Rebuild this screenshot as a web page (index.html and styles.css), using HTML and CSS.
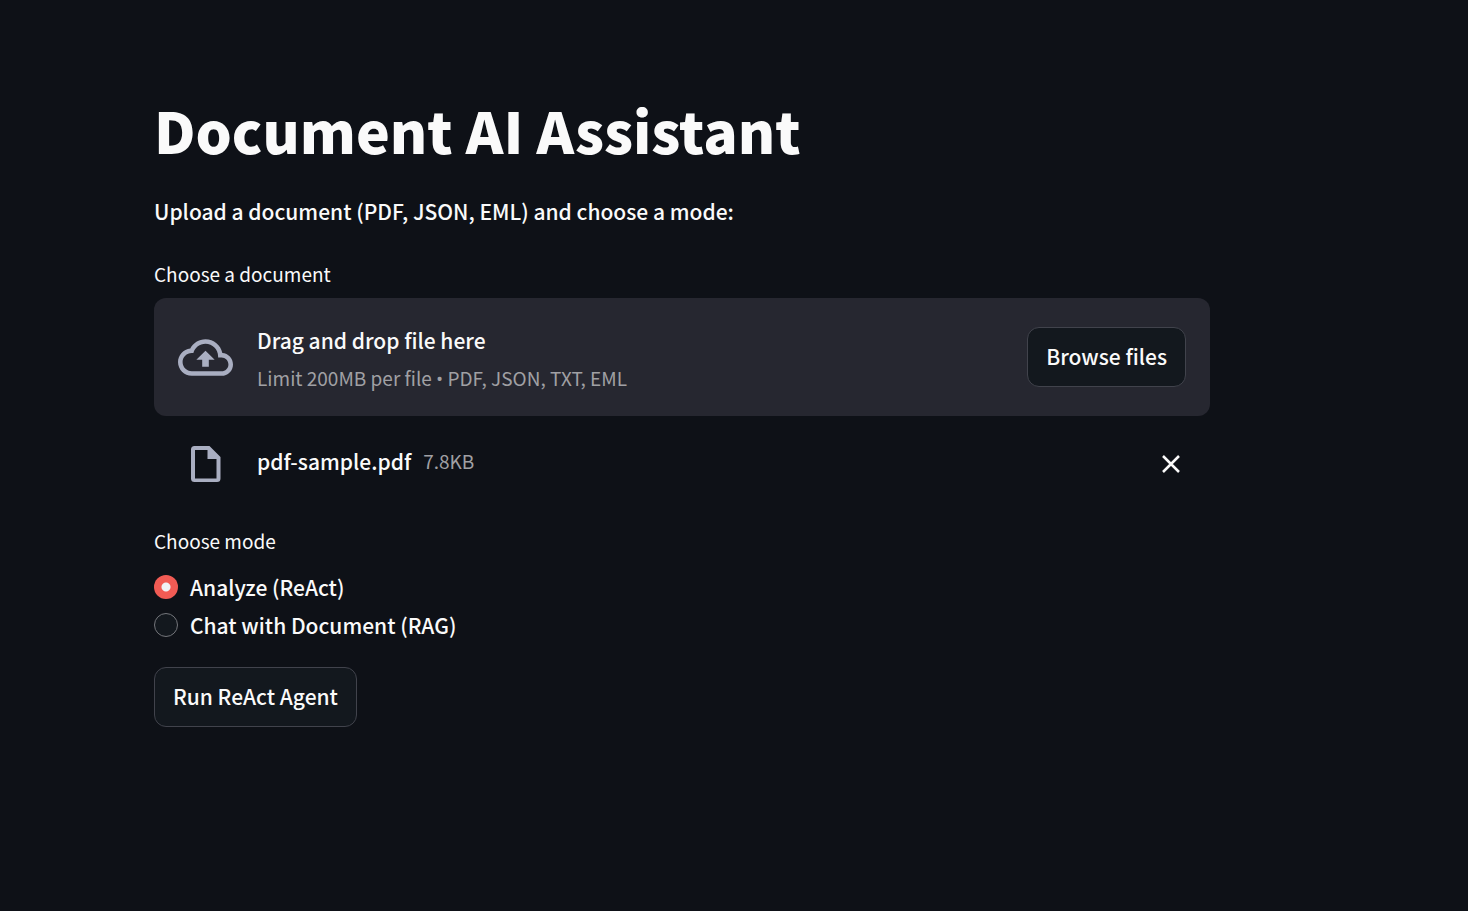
FILE: index.html
```html
<!DOCTYPE html>
<html lang="en">
<head>
<meta charset="utf-8">
<title>Document AI Assistant</title>
<link rel="stylesheet" href="styles.css">
</head>
<body>
<main class="page">
  <h1 class="title">Document AI Assistant</h1>
  <p class="intro">Upload a document (PDF, JSON, EML) and choose a mode:</p>

  <section class="uploader" aria-labelledby="upload-label">
    <h2 class="label" id="upload-label">Choose a document</h2>
    <div class="dropzone">
      <span class="icon-slot">
        <svg class="cloud" viewBox="0 0 24 24" aria-hidden="true"><path d="M19.35 10.04C18.67 6.59 15.64 4 12 4 9.11 4 6.6 5.64 5.35 8.04 2.34 8.36 0 10.91 0 14c0 3.31 2.69 6 6 6h13c2.76 0 5-2.24 5-5 0-2.64-2.05-4.78-4.65-4.96zM19 18H6c-2.21 0-4-1.79-4-4s1.79-4 4-4h.71C7.37 7.69 9.48 6 12 6c3.04 0 5.5 2.46 5.5 5.5v.5H19c1.66 0 3 1.34 3 3s-1.34 3-3 3zM8 13h2.55v3h2.9v-3H16l-4-4z"/></svg>
      </span>
      <div class="drop-text">
        <span class="drop-main">Drag and drop file here</span>
        <small class="hint">Limit 200MB per file <span class="bullet">•</span> PDF, JSON, TXT, EML</small>
      </div>
      <button class="button" type="button">Browse files</button>
    </div>
    <div class="file-row">
      <span class="icon-slot">
        <svg class="file-icon" viewBox="0 0 30 36" aria-hidden="true"><path fill-rule="evenodd" d="M3.500 0H18.500L29.500 11V32.500A3.500 3.500 0 0 1 26 36H3.500A3.500 3.500 0 0 1 0 32.500V3.500A3.500 3.500 0 0 1 3.500 0ZM4 4V32.500H25.500V13H16.500V4Z"/></svg>
      </span>
      <span class="file-info">
        <span class="file-name">pdf-sample.pdf</span>
        <small class="hint">7.8KB</small>
      </span>
      <button class="remove" type="button" aria-label="Remove file">
        <svg class="cross" viewBox="0 0 18 18" aria-hidden="true"><path d="M1 1 17 17M17 1 1 17"/></svg>
      </button>
    </div>
  </section>

  <fieldset class="modes">
    <legend class="label mode-label">Choose mode</legend>
    <label class="mode"><input type="radio" name="mode" checked>Analyze (ReAct)</label>
    <label class="mode"><input type="radio" name="mode">Chat with Document (RAG)</label>
  </fieldset>

  <button class="button" type="button">Run ReAct Agent</button>
</main>
</body>
</html>
```
FILE: styles.css
```css
* { box-sizing: border-box; }

body {
  margin: 0;
  background: #0e1117;
  color: #fafafa;
  font: 500 21px/38px "Source Sans Pro", "Noto Sans CJK SC", sans-serif;
}

.page {
  max-width: 1210px;
  padding: 91px 0 91px 154px;
}

.title {
  margin: 0;
  font-size: 57px;
  line-height: 76px;
  font-weight: 900;
}

.intro { margin: 25px 0 28px; }

.label {
  margin: 0;
  padding: 0;
  font-size: 19px;
  line-height: 32px;
  font-weight: 400;
}

.dropzone {
  display: flex;
  align-items: center;
  min-height: 118px;
  margin-top: 8px;
  padding: 16px 24px;
  border-radius: 12px;
  background: #262730;
}

.icon-slot {
  display: flex;
  flex: none;
  justify-content: center;
  width: 55px;
  margin-right: 24px;
}

.cloud { width: 55px; height: 55px; fill: #a9aec1; }
.file-icon { width: 30px; height: 36px; fill: #a9aec1; }

.drop-text {
  display: flex;
  flex: 1;
  flex-direction: column;
  padding-top: 4px;
}

.hint {
  color: #a0a0a4;
  font-size: 19px;
  font-weight: 400;
}

.bullet { font-family: "Open Sans", sans-serif; }

.button {
  min-height: 60px;
  padding: 9px 18px 11px;
  border: 1px solid #41434c;
  border-radius: 12px;
  background: #13181e;
  color: inherit;
  font: inherit;
}

.file-row {
  display: flex;
  align-items: center;
  padding: 26px 24px 20px;
}

.file-info {
  display: flex;
  gap: 12px;
  padding-bottom: 6px;
}

.remove {
  display: flex;
  margin-left: auto;
  padding: 6px;
  border: 0;
  background: none;
}

.cross {
  width: 18px;
  height: 18px;
  stroke: #fafafa;
  stroke-width: 2.5;
}

.modes {
  margin: 19px 0 23px;
  padding: 0;
  border: 0;
}

.mode-label { padding-bottom: 11px; }

.mode {
  display: flex;
  align-items: center;
  gap: 12px;
}

.mode input {
  appearance: none;
  width: 24px;
  height: 24px;
  margin: 0;
  border: 1px solid #74767b;
  border-radius: 50%;
  background: #13181e;
}

.mode input:checked {
  border: 0;
  background: radial-gradient(circle, #f0f2f6 4px, #f15b54 5px);
}
```
